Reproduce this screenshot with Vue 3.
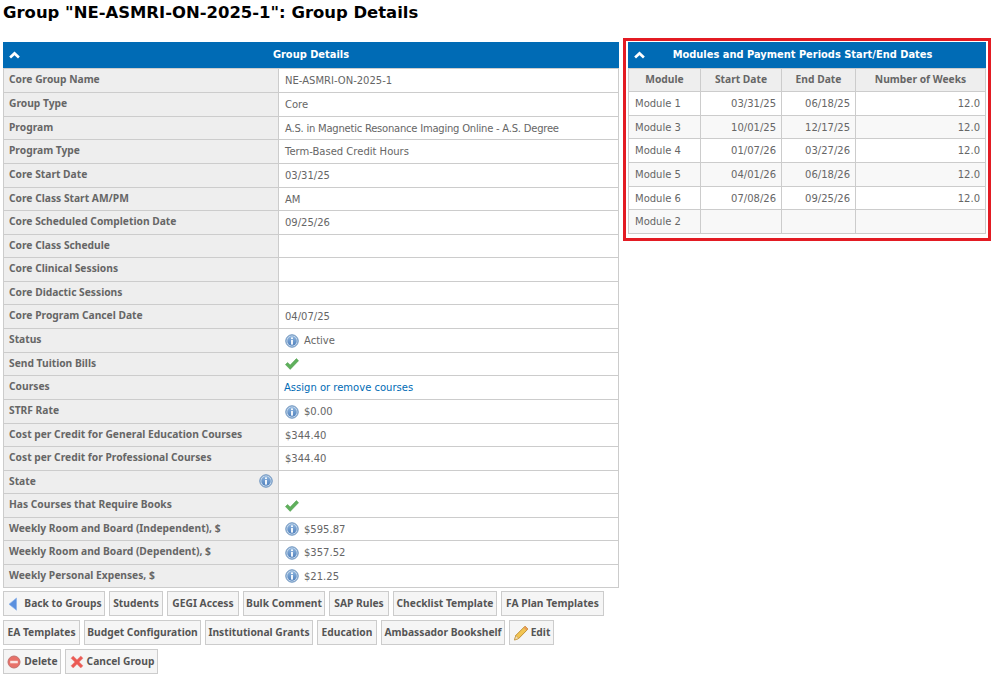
<script setup>
const rowHeights = [24, 24, 23, 24, 24, 23, 24, 23, 24, 23, 24, 24, 23, 24, 24, 23, 24, 23, 24, 23, 24, 23]
const modHeights = [23, 24, 23, 24, 24, 23, 24]
const rows = [
  { label: 'Core Group Name', value: 'NE-ASMRI-ON-2025-1' },
  { label: 'Group Type', value: 'Core' },
  { label: 'Program', value: 'A.S. in Magnetic Resonance Imaging Online - A.S. Degree', tight: true },
  { label: 'Program Type', value: 'Term-Based Credit Hours' },
  { label: 'Core Start Date', value: '03/31/25' },
  { label: 'Core Class Start AM/PM', value: 'AM' },
  { label: 'Core Scheduled Completion Date', value: '09/25/26' },
  { label: 'Core Class Schedule', value: '' },
  { label: 'Core Clinical Sessions', value: '' },
  { label: 'Core Didactic Sessions', value: '' },
  { label: 'Core Program Cancel Date', value: '04/07/25' },
  { label: 'Status', value: 'Active', info: true },
  { label: 'Send Tuition Bills', value: '', check: true },
  { label: 'Courses', value: 'Assign or remove courses', link: true },
  { label: 'STRF Rate', value: '$0.00', info: true },
  { label: 'Cost per Credit for General Education Courses', value: '$344.40' },
  { label: 'Cost per Credit for Professional Courses', value: '$344.40' },
  { label: 'State', value: '', labelInfo: true },
  { label: 'Has Courses that Require Books', value: '', check: true },
  { label: 'Weekly Room and Board (Independent), $', value: '$595.87', info: true },
  { label: 'Weekly Room and Board (Dependent), $', value: '$357.52', info: true },
  { label: 'Weekly Personal Expenses, $', value: '$21.25', info: true },
]
const modules = [
  ['Module 1', '03/31/25', '06/18/25', '12.0'],
  ['Module 3', '10/01/25', '12/17/25', '12.0'],
  ['Module 4', '01/07/26', '03/27/26', '12.0'],
  ['Module 5', '04/01/26', '06/18/26', '12.0'],
  ['Module 6', '07/08/26', '09/25/26', '12.0'],
  ['Module 2', '', '', ''],
]
const buttons = [
  { t: 'Back to Groups', i: 'back', w: 102 }, { t: 'Students', w: 54 }, { t: 'GEGI Access', w: 72 }, { t: 'Bulk Comment', w: 82 },
  { t: 'SAP Rules', w: 60 }, { t: 'Checklist Template', w: 104 }, { t: 'FA Plan Templates', w: 103 }, { t: 'EA Templates', w: 77 },
  { t: 'Budget Configuration', w: 117 }, { t: 'Institutional Grants', w: 108 }, { t: 'Education', w: 60 },
  { t: 'Ambassador Bookshelf', w: 124 }, { t: 'Edit', i: 'edit', w: 45 }, { t: 'Delete', i: 'delete', w: 58 }, { t: 'Cancel Group', i: 'cancel', w: 93 },
]
</script>

<template>
  <div class="page">
    <svg class="defs" aria-hidden="true">
      <defs>
        <linearGradient id="infoFill" x1="0" y1="0" x2="0" y2="1">
          <stop offset="0" stop-color="#8db4dd" />
          <stop offset="1" stop-color="#4f80bd" />
        </linearGradient>
        <symbol id="infoIcon" viewBox="0 0 14 14">
          <circle cx="7" cy="7" r="6.2" fill="#c3d6ea" stroke="#5f8aba" stroke-width="1" />
          <circle cx="7" cy="7" r="4.7" fill="url(#infoFill)" />
          <rect x="6.1" y="6" width="1.8" height="4.6" fill="#fff" />
          <rect x="6.1" y="3.4" width="1.8" height="1.7" fill="#fff" />
        </symbol>
        <symbol id="chevIcon" viewBox="0 0 11 8">
          <path d="M5.5 0.6 10.8 5.4 9 7.4 5.5 4.2 2 7.4 0.2 5.4Z" fill="#fff" />
        </symbol>
      </defs>
    </svg>
    <h1 class="title">Group "NE-ASMRI-ON-2025-1": Group Details</h1>
    <div class="panels">
      <div class="left">
        <div class="bar">
          <svg class="chev"><use href="#chevIcon" /></svg>
          <span>Group Details</span>
        </div>
        <table class="details">
          <colgroup><col class="c1" /><col /></colgroup>
          <tbody>
            <tr v-for="(r, i) in rows" :key="r.label" :style="{ height: rowHeights[i] + 'px' }">
              <th>
                <div class="lab">
                  <span>{{ r.label }}</span>
                  <svg v-if="r.labelInfo" class="info"><use href="#infoIcon" /></svg>
                </div>
              </th>
              <td>
                <div class="val">
                  <svg v-if="r.info" class="info"><use href="#infoIcon" /></svg>
                  <svg v-if="r.check" class="check" viewBox="0 0 14 12"><path d="M0.4 6.6 2.6 4.5 5.2 7 11.4 0.6 13.6 2.7 5.2 11.4Z" fill="#5fb05c" stroke="#4f9c4d" stroke-width=".5" /></svg>
                  <span :class="{ link: r.link, tight: r.tight }">{{ r.value }}</span>
                </div>
              </td>
            </tr>
          </tbody>
        </table>
      </div>
      <div class="right">
        <div class="bar bar-shift">
          <svg class="chev"><use href="#chevIcon" /></svg>
          <span>Modules and Payment Periods Start/End Dates</span>
        </div>
        <table class="mods">
          <colgroup><col class="m1" /><col class="m2" /><col class="m3" /><col /></colgroup>
          <thead>
            <tr :style="{ height: modHeights[0] + 'px' }"><th>Module</th><th>Start Date</th><th>End Date</th><th>Number of Weeks</th></tr>
          </thead>
          <tbody>
            <tr v-for="(m, i) in modules" :key="m[0]" :style="{ height: modHeights[i + 1] + 'px' }">
              <td>{{ m[0] }}</td><td class="num">{{ m[1] }}</td><td class="num">{{ m[2] }}</td><td class="num">{{ m[3] }}</td>
            </tr>
          </tbody>
        </table>
      </div>
    </div>
    <div class="buttons">
      <button v-for="b in buttons" :key="b.t" class="btn" type="button" :style="{ width: b.w + 'px' }">
        <svg v-if="b.i === 'back'" class="ic" viewBox="0 0 16 16"><path d="M10.5 2V14.2L3 8.2Z" fill="#5b90de" stroke="#8db2ea" stroke-width=".7" /></svg>
        <svg v-if="b.i === 'edit'" class="ic" viewBox="0 0 16 16"><path d="M12 1.2 15 4 5.8 13.4 1.6 15 2.8 10.4Z" fill="#f2c552" stroke="#bb8a2f" stroke-width=".9" /><path d="M12 1.2 15 4 13.6 5.5 10.6 2.7Z" fill="#e89a5a" /><path d="M1.6 15 2.8 10.4 5.8 13.4Z" fill="#f4dfb6" stroke="#bb8a2f" stroke-width=".5" /></svg>
        <svg v-if="b.i === 'delete'" class="ic" viewBox="0 0 16 16"><circle cx="8" cy="8" r="6" fill="#e87169" stroke="#c2706c" stroke-width="1" /><rect x="4.2" y="6.8" width="7.6" height="2.5" fill="#fbe4e2" /></svg>
        <svg v-if="b.i === 'cancel'" class="ic" viewBox="0 0 16 16"><path d="M2 4.2 4.2 2 8 5.8 11.8 2 14 4.2 10.2 8 14 11.8 11.8 14 8 10.2 4.2 14 2 11.8 5.8 8Z" fill="#ec5b55" stroke="#e78680" stroke-width=".5" /></svg>
        <span class="btn-text">{{ b.t }}</span>
      </button>
    </div>
  </div>
</template>

<style scoped>
.page { width: 992px; height: 678px; overflow: hidden; box-sizing: border-box; padding: 3px 0 0 3px; font-family: "DejaVu Sans", Verdana, sans-serif; font-size: 10px; color: #666; }
.defs { position: absolute; width: 0; height: 0; }
.title { margin: 0 0 20px 0; font-size: 16.45px; line-height: 19px; font-weight: 700; color: #000; }
.panels { display: flex; align-items: flex-start; gap: 4px; }
.left { width: 616px; flex: none; }
.right { width: 358px; flex: none; margin-top: -4px; padding: 1px 2px 4px; border: 3px solid #e31b23; }
.bar { position: relative; height: 26px; box-sizing: border-box; padding-bottom: 1px; background: #006bb5; color: #fff; font-weight: 700; font-size: 9.9px; display: flex; align-items: center; justify-content: center; }
.bar-shift { padding-right: 9px; }
.chev { position: absolute; left: 6px; top: 9px; width: 11px; height: 8px; }
table { border-collapse: collapse; table-layout: fixed; width: 100%; }
.details th, .details td, .mods th, .mods td { border: 1px solid #ccc; padding: 0 5px; box-sizing: border-box; }
.c1 { width: 275px; }
.details th { background: #eee; text-align: left; font: 700 10.25px "Noto Sans", sans-serif; color: #666; padding-bottom: 3px; }
.details td { background: #fff; font-weight: 400; }
.lab { display: flex; justify-content: space-between; align-items: center; }
.val { display: flex; align-items: center; gap: 5px; padding-left: 1px; }
.link { color: #006bb5; margin-left: -1px; }
.tight { letter-spacing: -0.23px; }
.info { width: 14px; height: 14px; flex: none; }
.check { width: 14px; height: 12px; flex: none; }
.m1 { width: 72px; }
.m2 { width: 81px; }
.m3 { width: 74px; }
.mods th { background: #eee; font: 700 10.25px "Noto Sans", sans-serif; color: #666; text-align: center; padding-bottom: 2px; }
.mods td { background: #fff; }
.mods td:first-child { padding-left: 6px; }
.mods tbody tr:nth-child(even) td { background: #f8f8f8; }
.mods .num { text-align: right; }
.buttons { display: flex; flex-wrap: wrap; gap: 4px; margin-top: 3px; width: 608px; }
.btn { display: inline-flex; align-items: center; justify-content: center; gap: 2px; height: 25px; margin: 0; padding: 0; border: 1px solid #ccc; background: #f5f5f5; color: #555; font: 700 10.25px "Noto Sans", sans-serif; white-space: nowrap; }
.btn-text { margin-bottom: 2px; }
.ic { width: 16px; height: 16px; flex: none; }
</style>
